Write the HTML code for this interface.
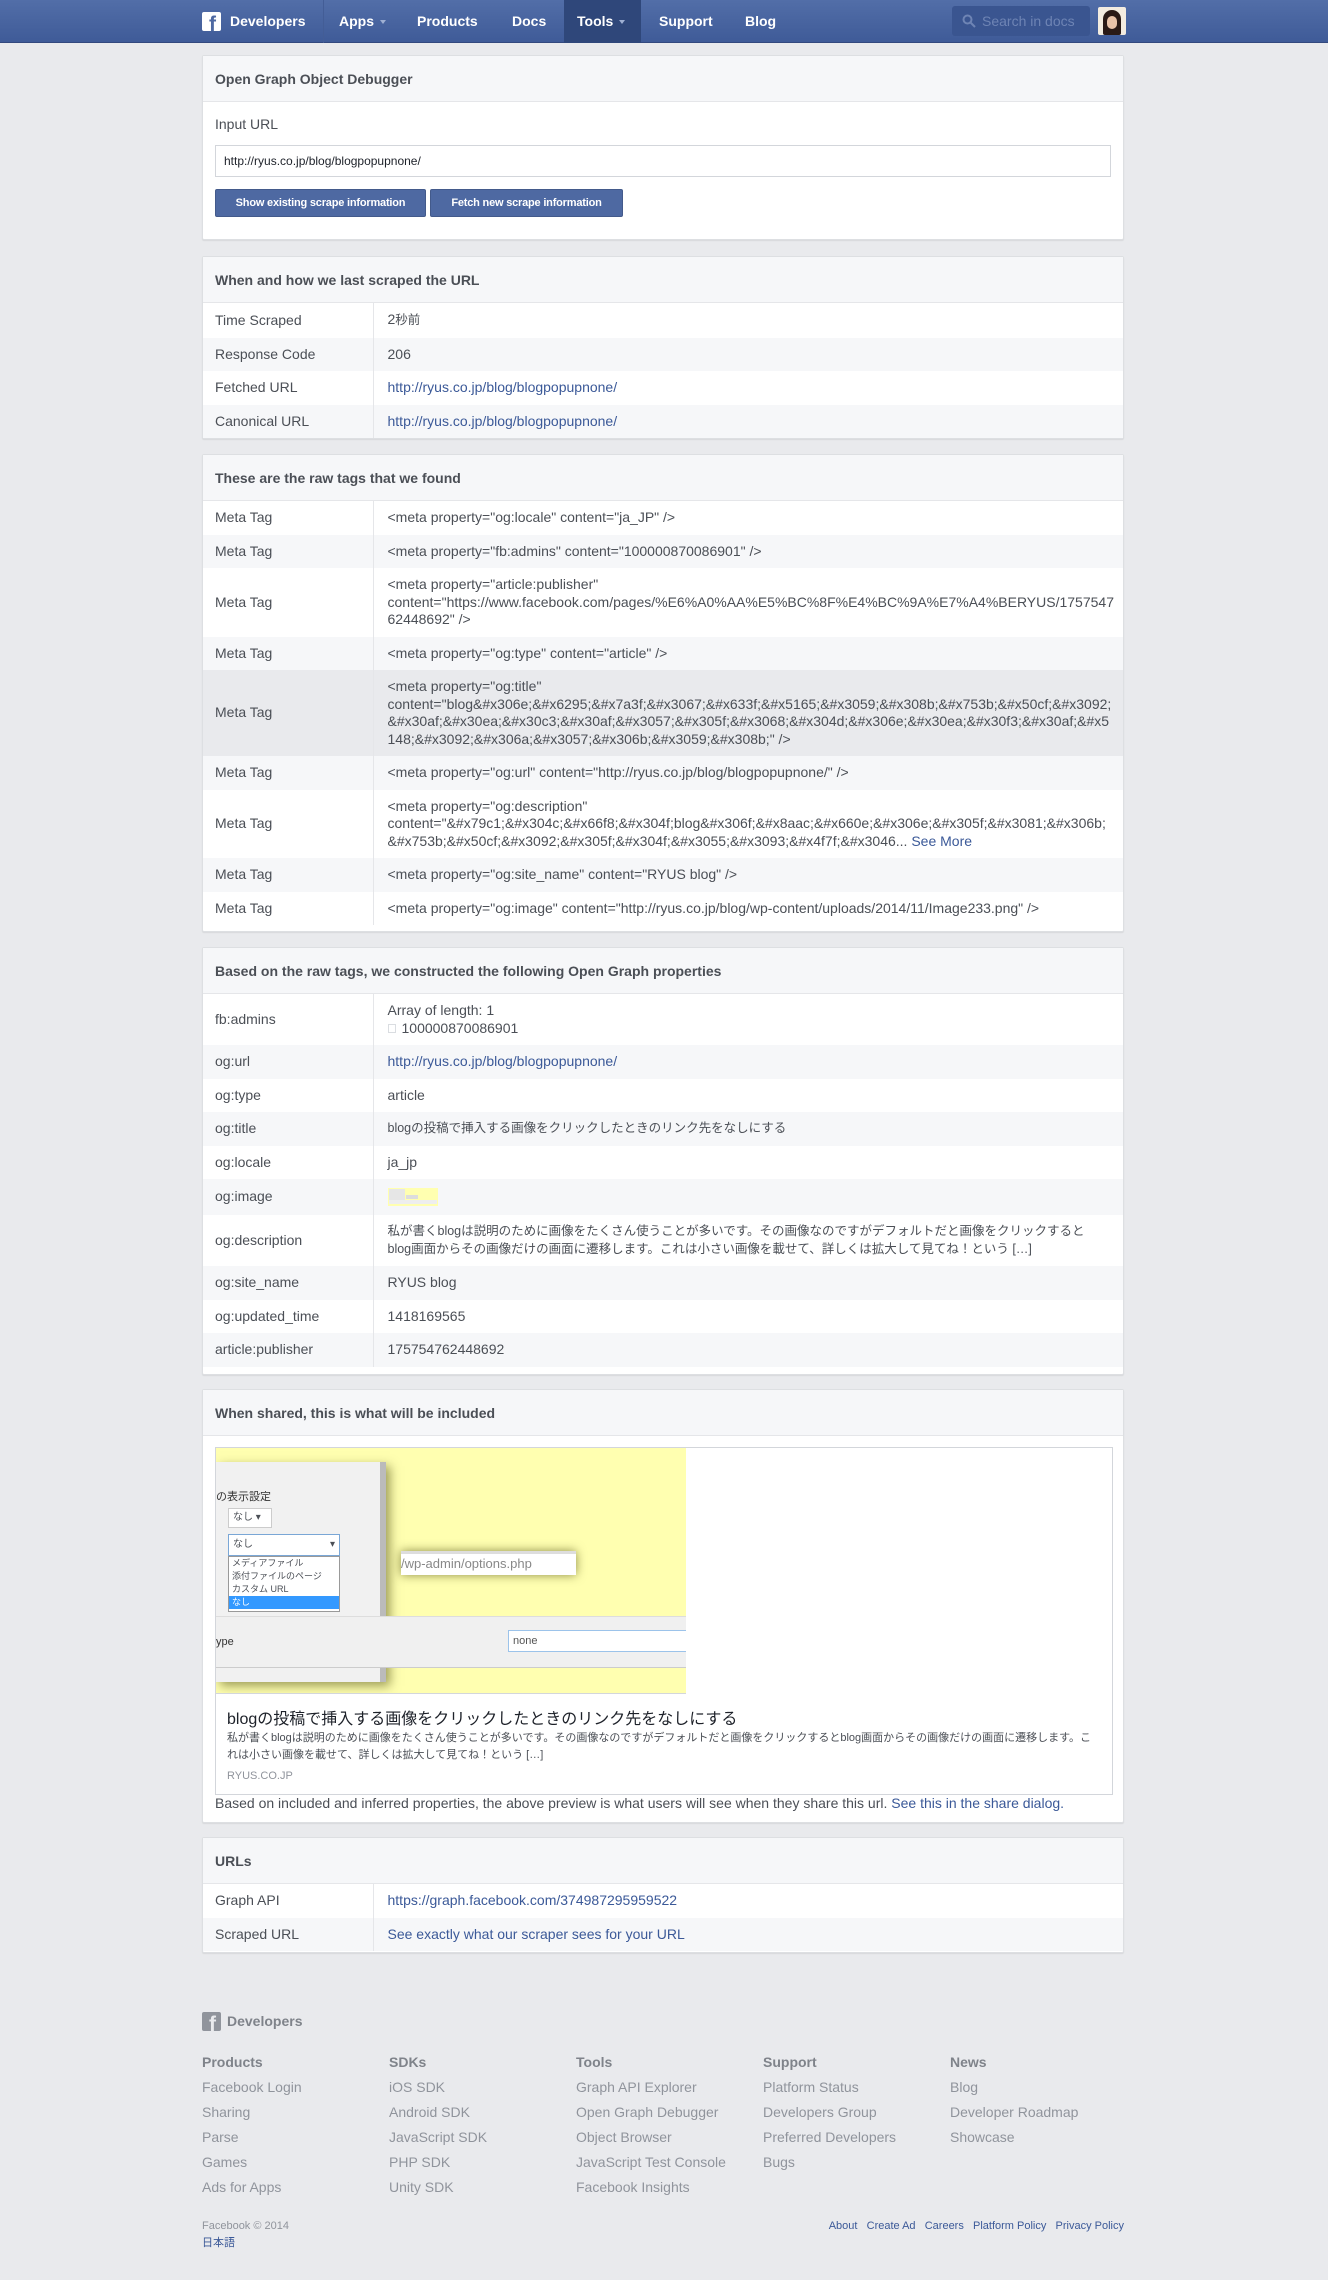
<!DOCTYPE html>
<html><head><meta charset="utf-8">
<style>
*{box-sizing:border-box;margin:0;padding:0}
body{width:1328px;height:2280px;background:#e9eaed;font-family:"Liberation Sans","Noto Sans CJK JP",sans-serif;font-size:14px;color:#4b4f56;position:relative;overflow:hidden}
a{color:#3b5998;text-decoration:none}
.jp{font-size:12.5px}
.hdr{position:absolute;left:0;top:0;width:1328px;height:43px;background:linear-gradient(#526ea8,#3f5b98);border-bottom:1px solid #33497e}
.hdr .it{position:absolute;top:0;height:43px;line-height:43px;color:#fff;font-weight:bold;font-size:14px}
.caret{display:inline-block;width:0;height:0;border-left:3px solid transparent;border-right:3px solid transparent;border-top:4px solid #9fb0d3;margin-left:6px;vertical-align:middle}
.panel{position:absolute;left:202px;width:922px;background:#fff;border:1px solid #dddfe2;border-radius:2px;box-shadow:0 1px 1px rgba(0,0,0,.08)}
.ph{height:46px;background:#f6f7f9;border-bottom:1px solid #e5e6e9;font-weight:bold;font-size:14px;color:#4b4f56;padding:0 12px;line-height:46px}
table{width:100%;border-collapse:collapse}
td{vertical-align:middle;padding:8px 0;line-height:17.5px;font-size:14px;color:#4b4f56}
td.l{width:170px;padding-left:12px;border-right:1px solid #e5e6e9}
td.v{padding-left:14px;padding-right:8px;word-break:break-all}
tr:nth-child(even) td{background:#f6f7f9}
tr.hl td{background:#e9eaed}
.btn{position:absolute;height:28px;line-height:26px;background:#4e69a2;border:1px solid #435a8b;color:#fff;font-weight:bold;font-size:11px;text-align:center;white-space:nowrap;border-radius:2px;letter-spacing:-0.2px}
.ft{position:absolute;font-size:14px;color:#90949c}
.ft b{color:#7f838a}
.ft div{height:25px;line-height:25px}
</style></head><body>
<div class="hdr">
  <div style="position:absolute;left:202px;top:12px;width:19px;height:19px;background:#fff;border-radius:2px;overflow:hidden"><span style="position:absolute;left:7px;top:1px;font:bold 21px 'Liberation Sans';color:#4e69a2">f</span></div>
  <div class="it" style="left:230px">Developers</div>
  <div style="position:absolute;left:323px;top:0;width:1px;height:43px;background:#435d96"></div>
  <div class="it" style="left:339px">Apps<span class="caret"></span></div>
  <div class="it" style="left:417px">Products</div>
  <div class="it" style="left:512px">Docs</div>
  <div class="it" style="left:564px;width:77px;background:#2f477a;padding-left:13px">Tools<span class="caret"></span></div>
  <div class="it" style="left:659px">Support</div>
  <div class="it" style="left:745px">Blog</div>
  <div style="position:absolute;left:952px;top:6px;width:138px;height:30px;background:#3a5590;border-radius:3px;color:#6e84b4;font-size:14px;line-height:30px;padding-left:30px">Search in docs
    <svg style="position:absolute;left:10px;top:8px" width="14" height="14" viewBox="0 0 14 14"><circle cx="5.5" cy="5.5" r="4" fill="none" stroke="#6e84b4" stroke-width="2"/><path d="M8.5 8.5L13 13" stroke="#6e84b4" stroke-width="2"/></svg></div>
  <div style="position:absolute;left:1098px;top:7px;width:28px;height:28px;background:#f3ece0;border-radius:2px;overflow:hidden"><div style="position:absolute;left:5px;top:3px;width:18px;height:25px;background:#2a1a16;border-radius:9px 9px 2px 2px"></div><div style="position:absolute;left:9px;top:9px;width:10px;height:13px;background:#e9c3a8;border-radius:5px"></div></div>
</div>

<div class="panel" style="top:55px;height:185px">
  <div class="ph">Open Graph Object Debugger</div>
  <div style="position:absolute;left:12px;top:60px;font-size:14px;color:#4b4f56">Input URL</div>
  <div style="position:absolute;left:12px;top:89px;width:896px;height:32px;border:1px solid #d3d6db;font-size:12px;line-height:30px;padding-left:8px;color:#1d2129">http://ryus.co.jp/blog/blogpopupnone/</div>
  <div class="btn" style="left:12px;top:133px;width:211px">Show existing scrape information</div>
  <div class="btn" style="left:227px;top:133px;width:193px">Fetch new scrape information</div>
</div>

<div class="panel" style="top:256px;height:183px">
  <div class="ph">When and how we last scraped the URL</div>
  <table>
  <tr><td class="l">Time Scraped</td><td class="v">2<span class="jp">秒前</span></td></tr>
  <tr><td class="l">Response Code</td><td class="v">206</td></tr>
  <tr><td class="l">Fetched URL</td><td class="v"><a>http://ryus.co.jp/blog/blogpopupnone/</a></td></tr>
  <tr><td class="l">Canonical URL</td><td class="v"><a>http://ryus.co.jp/blog/blogpopupnone/</a></td></tr>
  </table>
</div>

<div class="panel" style="top:454px;height:478px">
  <div class="ph">These are the raw tags that we found</div>
  <table>
  <tr><td class="l">Meta Tag</td><td class="v">&lt;meta property="og:locale" content="ja_JP" /&gt;</td></tr>
  <tr><td class="l">Meta Tag</td><td class="v">&lt;meta property="fb:admins" content="100000870086901" /&gt;</td></tr>
  <tr><td class="l">Meta Tag</td><td class="v">&lt;meta property="article:publisher"<br>content="https://www.facebook.com/pages/%E6%A0%AA%E5%BC%8F%E4%BC%9A%E7%A4%BERYUS/175754762448692" /&gt;</td></tr>
  <tr><td class="l">Meta Tag</td><td class="v">&lt;meta property="og:type" content="article" /&gt;</td></tr>
  <tr class="hl"><td class="l">Meta Tag</td><td class="v">&lt;meta property="og:title"<br>content="blog&amp;#x306e;&amp;#x6295;&amp;#x7a3f;&amp;#x3067;&amp;#x633f;&amp;#x5165;&amp;#x3059;&amp;#x308b;&amp;#x753b;&amp;#x50cf;&amp;#x3092;&amp;#x30af;&amp;#x30ea;&amp;#x30c3;&amp;#x30af;&amp;#x3057;&amp;#x305f;&amp;#x3068;&amp;#x304d;&amp;#x306e;&amp;#x30ea;&amp;#x30f3;&amp;#x30af;&amp;#x5148;&amp;#x3092;&amp;#x306a;&amp;#x3057;&amp;#x306b;&amp;#x3059;&amp;#x308b;" /&gt;</td></tr>
  <tr><td class="l">Meta Tag</td><td class="v">&lt;meta property="og:url" content="http://ryus.co.jp/blog/blogpopupnone/" /&gt;</td></tr>
  <tr><td class="l">Meta Tag</td><td class="v">&lt;meta property="og:description"<br>content="&amp;#x79c1;&amp;#x304c;&amp;#x66f8;&amp;#x304f;blog&amp;#x306f;&amp;#x8aac;&amp;#x660e;&amp;#x306e;&amp;#x305f;&amp;#x3081;&amp;#x306b;&amp;#x753b;&amp;#x50cf;&amp;#x3092;&amp;#x305f;&amp;#x304f;&amp;#x3055;&amp;#x3093;&amp;#x4f7f;&amp;#x3046... <a>See More</a></td></tr>
  <tr><td class="l">Meta Tag</td><td class="v">&lt;meta property="og:site_name" content="RYUS blog" /&gt;</td></tr>
  <tr><td class="l">Meta Tag</td><td class="v">&lt;meta property="og:image" content="http://ryus.co.jp/blog/wp-content/uploads/2014/11/Image233.png" /&gt;</td></tr>
  </table>
</div>

<div class="panel" style="top:947px;height:428px">
  <div class="ph">Based on the raw tags, we constructed the following Open Graph properties</div>
  <table>
  <tr><td class="l">fb:admins</td><td class="v">Array of length: 1<br><span style="display:inline-block;width:8px;height:9px;border:1px solid #dadde1;margin-right:6px"></span>100000870086901</td></tr>
  <tr><td class="l">og:url</td><td class="v"><a>http://ryus.co.jp/blog/blogpopupnone/</a></td></tr>
  <tr><td class="l">og:type</td><td class="v">article</td></tr>
  <tr><td class="l">og:title</td><td class="v jp">blogの投稿で挿入する画像をクリックしたときのリンク先をなしにする</td></tr>
  <tr><td class="l">og:locale</td><td class="v">ja_jp</td></tr>
  <tr><td class="l" style="height:36px">og:image</td><td class="v"><span style="display:inline-block;width:50px;height:18px;background:#ffffb0;position:relative;vertical-align:middle"><span style="position:absolute;left:1px;top:1px;width:16px;height:14px;background:#e6e6e6"></span><span style="position:absolute;left:18px;top:7px;width:12px;height:4px;background:#ddd"></span><span style="position:absolute;left:1px;top:12px;width:48px;height:4px;background:#eee"></span></span></td></tr>
  <tr><td class="l">og:description</td><td class="v jp">私が書くblogは説明のために画像をたくさん使うことが多いです。その画像なのですがデフォルトだと画像をクリックすると<br>blog画面からその画像だけの画面に遷移します。これは小さい画像を載せて、詳しくは拡大して見てね！という […]</td></tr>
  <tr><td class="l">og:site_name</td><td class="v">RYUS blog</td></tr>
  <tr><td class="l">og:updated_time</td><td class="v">1418169565</td></tr>
  <tr><td class="l">article:publisher</td><td class="v">175754762448692</td></tr>
  </table>
</div>

<div class="panel" style="top:1389px;height:434px">
  <div class="ph">When shared, this is what will be included</div>
  <div style="position:absolute;left:12px;top:57px;width:898px;height:348px;border:1px solid #d3d6db;background:#fff">
    <div style="position:absolute;left:0;top:0;width:470px;height:246px;background:#ffffb0;overflow:hidden;border-bottom:1px solid #d3d6db">
      <div style="position:absolute;left:0;top:14px;width:170px;height:220px;background:#f1f1f1;border-right:6px solid #bbb;box-shadow:4px 4px 10px rgba(60,60,0,.5)"></div>
      <div style="position:absolute;left:0;top:40px;font-size:11px;color:#333">の表示設定</div>
      <div style="position:absolute;left:12px;top:60px;width:44px;height:20px;border:1px solid #ccc;background:#fff;font-size:10px;line-height:18px;padding-left:4px">なし ▾</div>
      <div style="position:absolute;left:12px;top:86px;width:112px;height:22px;border:1px solid #7aa7d6;background:#fff;font-size:10px;line-height:20px;padding-left:4px">なし<span style="float:right;margin-right:4px">▾</span></div>
      <div style="position:absolute;left:12px;top:108px;width:112px;height:56px;border:1px solid #999;background:#fff;font-size:9px;line-height:13px;padding-left:3px">メディアファイル<br>添付ファイルのページ<br>カスタム URL<br><span style="display:block;background:#3399ff;color:#fff;margin-left:-3px;padding-left:3px">なし</span></div>
      <div style="position:absolute;left:185px;top:103px;width:175px;height:24px;background:#fff;border-top:3px solid #ddd;font-size:13px;color:#888;line-height:20px;box-shadow:0 0 10px rgba(60,60,0,.6)">/wp-admin/options.php</div>
      <div style="position:absolute;left:0;top:168px;width:470px;height:52px;background:#f0f0f0;border-top:1px solid #ddd;border-bottom:1px solid #ccc"></div>
      <div style="position:absolute;left:0;top:188px;font-size:11px;color:#333">ype</div>
      <div style="position:absolute;left:292px;top:182px;width:180px;height:22px;border:1px solid #9cc3ea;background:#fff;font-size:11px;line-height:20px;padding-left:4px;color:#555">none</div>
    </div>
    <div style="position:absolute;left:11px;top:257px;font-size:16px;color:#1d2129">blogの投稿で挿入する画像をクリックしたときのリンク先をなしにする</div>
    <div style="position:absolute;left:11px;top:282px;width:880px;font-size:11px;line-height:17px;color:#4b4f56">私が書くblogは説明のために画像をたくさん使うことが多いです。その画像なのですがデフォルトだと画像をクリックするとblog画面からその画像だけの画面に遷移します。こ<br>れは小さい画像を載せて、詳しくは拡大して見てね！という […]</div>
    <div style="position:absolute;left:11px;top:322px;font-size:11px;color:#90949c">RYUS.CO.JP</div>
  </div>
  <div style="position:absolute;left:12px;top:405px;font-size:14px;color:#4b4f56">Based on included and inferred properties, the above preview is what users will see when they share this url. <a>See this in the share dialog.</a></div>
</div>

<div class="panel" style="top:1837px;height:116px">
  <div class="ph">URLs</div>
  <table>
  <tr><td class="l">Graph API</td><td class="v"><a>https://graph.facebook.com/374987295959522</a></td></tr>
  <tr><td class="l">Scraped URL</td><td class="v"><a>See exactly what our scraper sees for your URL</a></td></tr>
  </table>
</div>

<div style="position:absolute;left:202px;top:2012px;width:19px;height:19px;background:#90949c;border-radius:2px;overflow:hidden"><span style="position:absolute;left:7px;top:1px;font:bold 21px 'Liberation Sans';color:#e9eaed">f</span></div>
<div style="position:absolute;left:227px;top:2013px;font-weight:bold;font-size:14px;color:#7f838a">Developers</div>

<div class="ft" style="left:202px;top:2050px"><div><b>Products</b></div><div>Facebook Login</div><div>Sharing</div><div>Parse</div><div>Games</div><div>Ads for Apps</div></div>
<div class="ft" style="left:389px;top:2050px"><div><b>SDKs</b></div><div>iOS SDK</div><div>Android SDK</div><div>JavaScript SDK</div><div>PHP SDK</div><div>Unity SDK</div></div>
<div class="ft" style="left:576px;top:2050px"><div><b>Tools</b></div><div>Graph API Explorer</div><div>Open Graph Debugger</div><div>Object Browser</div><div>JavaScript Test Console</div><div>Facebook Insights</div></div>
<div class="ft" style="left:763px;top:2050px"><div><b>Support</b></div><div>Platform Status</div><div>Developers Group</div><div>Preferred Developers</div><div>Bugs</div></div>
<div class="ft" style="left:950px;top:2050px"><div><b>News</b></div><div>Blog</div><div>Developer Roadmap</div><div>Showcase</div></div>

<div style="position:absolute;left:202px;top:2220px;font-size:11px;color:#90949c">Facebook © 2014</div>
<div style="position:absolute;left:202px;top:2234px;font-size:11px;color:#3b5998">日本語</div>
<div style="position:absolute;right:204px;top:2220px;font-size:11px;color:#3b5998">About&nbsp;&nbsp;&nbsp;Create Ad&nbsp;&nbsp;&nbsp;Careers&nbsp;&nbsp;&nbsp;Platform Policy&nbsp;&nbsp;&nbsp;Privacy Policy</div>
</body></html>
